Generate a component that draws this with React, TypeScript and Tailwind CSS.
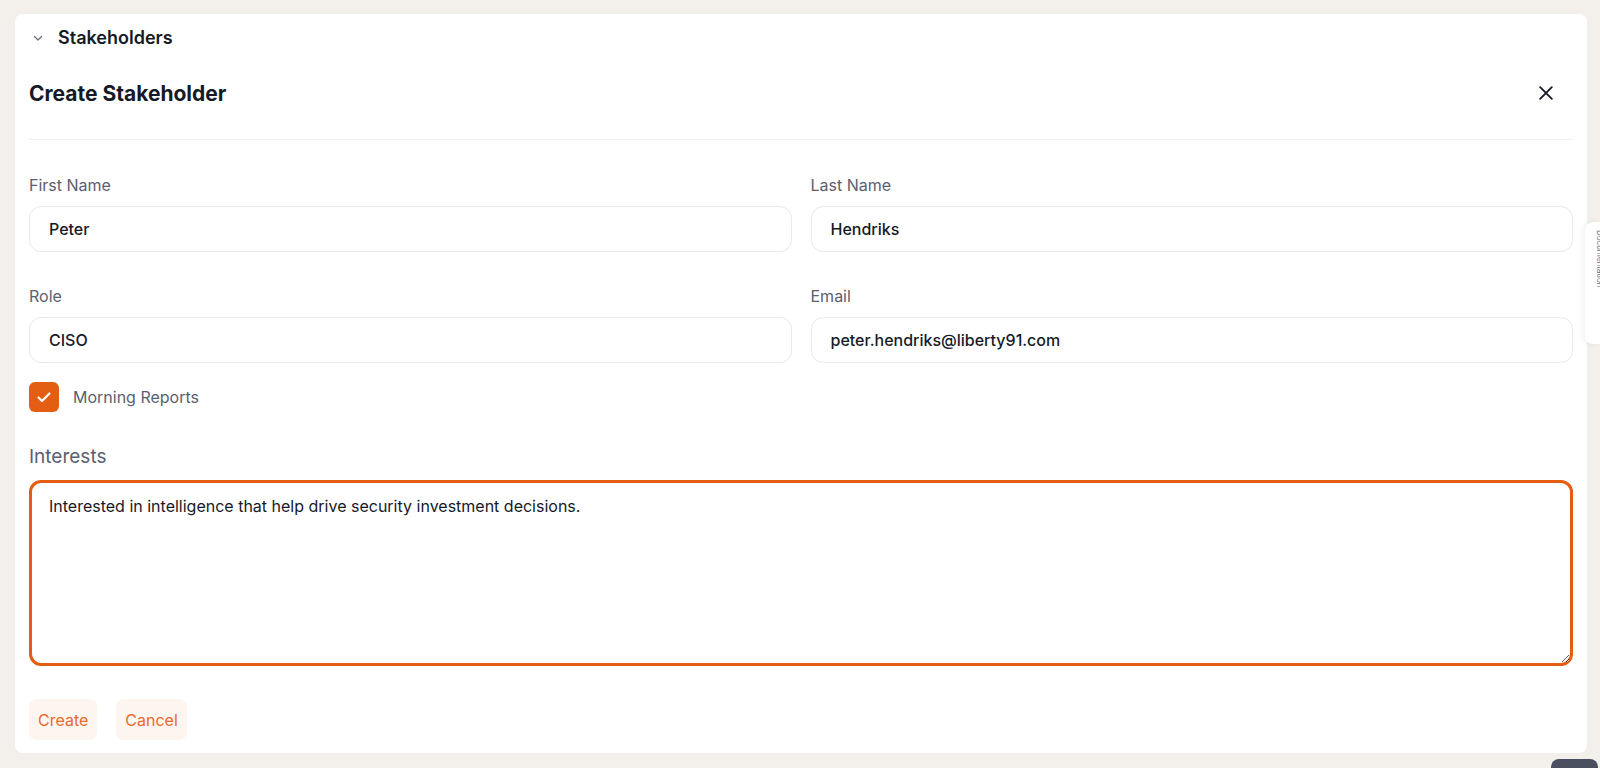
import React, { useState } from 'react';

const font = { fontFamily: 'Inter, "Noto Sans", sans-serif' };

function Field({ label, value }: { label: string; value: string }) {
    return (
        <div className="flex flex-col">
            <label className="text-[16px] leading-[22px] text-[#5b6070]">{label}</label>
            <div className="mt-[10px] h-[46px] rounded-xl border border-[#ece8e5] px-[19px] flex items-center text-[16px] font-medium text-[#161a26]">
                {value}
            </div>
        </div>
    );
}

export default function App() {
    const [checked, setChecked] = useState(true);

    return (
        <div className="min-h-screen bg-[#f3efeb] pt-[14px] pl-[15px] pr-[13px] relative overflow-hidden" style={font}>
            <div className="bg-white rounded-lg px-[14px] pb-[13px]">
                {/* Section header */}
                <div className="h-[46px] flex items-center gap-[14px] pt-[1px]">
                    <svg className="w-[12px] h-[12px] ml-[3px] text-[#6b7080]" viewBox="0 0 12 12" fill="none" stroke="currentColor" strokeWidth="1.3" strokeLinecap="round" strokeLinejoin="round">
                        <path d="M2.5 4.5 6 8l3.5-3.5" />
                    </svg>
                    <span className="text-[18px] font-semibold text-[#161a26]">Stakeholders</span>
                </div>

                {/* Title */}
                <div className="h-[80px] flex items-center justify-between border-b border-[#f1eeeb]">
                    <h1 className="text-[21px] font-bold text-[#161a26] -mt-[11px]">Create Stakeholder</h1>
                    <button className="w-[30px] h-[30px] flex items-center justify-center -mt-[13px] mr-[12px] text-[#161a26]">
                        <svg className="w-[20px] h-[20px]" viewBox="0 0 24 24" fill="none" stroke="currentColor" strokeWidth="2.2" strokeLinecap="round">
                            <path d="M5 5l14 14M19 5 5 19" />
                        </svg>
                    </button>
                </div>

                {/* Form */}
                <div className="pt-[34px] grid grid-cols-2 gap-x-[19px] gap-y-[33px]">
                    <Field label="First Name" value="Peter" />
                    <Field label="Last Name" value="Hendriks" />
                    <Field label="Role" value="CISO" />
                    <Field label="Email" value="peter.hendriks@liberty91.com" />
                </div>

                {/* Checkbox */}
                <div className="mt-[19px] flex items-center gap-[14px]">
                    <button
                        onClick={() => setChecked(!checked)}
                        className="w-[30px] h-[30px] rounded-md bg-[#e35d12] flex items-center justify-center"
                    >
                        {checked && (
                            <svg className="w-[20px] h-[20px] text-white" viewBox="0 0 20 20" fill="none" stroke="currentColor" strokeWidth="2.2" strokeLinecap="round" strokeLinejoin="round">
                                <path d="M4.5 10.5l3.5 3.5 7.5-7.5" />
                            </svg>
                        )}
                    </button>
                    <span className="text-[16px] text-[#5b6070]">Morning Reports</span>
                </div>

                {/* Interests */}
                <div className="mt-[33px]">
                    <label className="block text-[19px] leading-[24px] text-[#5b6070]">Interests</label>
                    <textarea
                        className="mt-[11px] block w-full h-[186px] rounded-xl border-[3px] border-[#e35d12] px-[17px] py-[11px] text-[16px] leading-[24px] text-[#161a26] outline-none resize-y"
                        defaultValue="Interested in intelligence that help drive security investment decisions."
                    />
                </div>

                {/* Actions */}
                <div className="mt-[33px] flex items-center gap-[19px]">
                    <button className="h-[41px] px-[9px] rounded-lg bg-[#fdf5f0] text-[16px] text-[#ea6a2c]">Create</button>
                    <button className="h-[41px] px-[9px] rounded-lg bg-[#fdf5f0] text-[16px] text-[#ea6a2c]">Cancel</button>
                </div>
            </div>

            {/* Side tab */}
            <div className="absolute right-0 top-[222px] w-[15px] h-[122px] bg-white rounded-l-lg shadow-[-2px_0_6px_rgba(0,0,0,0.06)] overflow-hidden">
                <span className="absolute left-[9px] top-[8px] text-[8px] text-[#6b7080] [writing-mode:vertical-rl] whitespace-nowrap">Documentation</span>
            </div>

            {/* Bottom corner pill */}
            <div className="absolute right-[2px] top-[759px] w-[47px] h-[20px] rounded-t-lg bg-[#4a5060]" />
        </div>
    );
}
